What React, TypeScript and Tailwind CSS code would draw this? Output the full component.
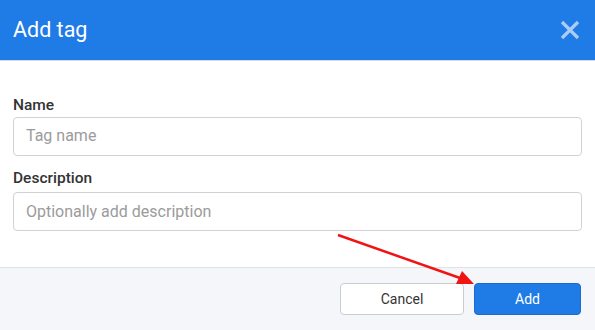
import React from 'react';

export default function App() {
  return (
    <div className="relative w-[595px] h-[330px] overflow-hidden bg-white font-['Roboto',sans-serif]">
      {/* Header */}
      <div className="flex h-[61px] items-center justify-between bg-[#1f7be6] pl-[13px] pr-[15px] border-b border-[#d5dbe3]">
        <h1 className="text-[21.5px] text-white leading-none pb-[1px]">Add tag</h1>
        <button className="text-[#a9cdf6]" aria-label="Close">
          <svg width="20" height="20" viewBox="0 0 20 20" fill="none" stroke="currentColor" strokeWidth={3.2} strokeLinecap="butt">
            <path d="M2 2 L18 18 M18 2 L2 18" />
          </svg>
        </button>
      </div>

      {/* Body */}
      <div className="flex flex-col px-[13px] pt-[37px] h-[206px]">
        <label className="text-[15.5px] font-medium text-[#333] leading-none mb-[3px]">Name</label>
        <div className="flex h-[39px] items-center rounded-[4px] border border-[#cfd3d8] px-[12px] text-[16px] text-[#9b9b9b]">
          Tag name
        </div>
        <label className="text-[15.5px] font-medium text-[#333] leading-none mt-[15px] mb-[6px]">Description</label>
        <div className="flex h-[39px] items-center rounded-[4px] border border-[#cfd3d8] px-[12px] text-[16px] text-[#9b9b9b]">
          Optionally add description
        </div>
      </div>

      {/* Footer */}
      <div className="flex h-[63px] items-start justify-end gap-[10px] border-t border-[#dfe3e8] bg-[#f4f6f9] pt-[15px] pr-[14px]">
        <button className="h-[32px] w-[124px] rounded-[4px] border border-[#c9cdd2] bg-white text-[14px] text-[#333]">
          Cancel
        </button>
        <button className="h-[32px] w-[107px] rounded-[4px] border border-[#1a6cc9] bg-[#1f7be6] text-[14px] text-white">
          Add
        </button>
      </div>

      {/* Annotation arrow */}
      <svg className="absolute left-0 top-0 pointer-events-none" width="595" height="330">
        <line x1="338" y1="235" x2="460" y2="278" stroke="#f01414" strokeWidth={2.5} />
        <polygon points="474,284 456,284 462,271" fill="#f01414" />
      </svg>
    </div>
  );
}
